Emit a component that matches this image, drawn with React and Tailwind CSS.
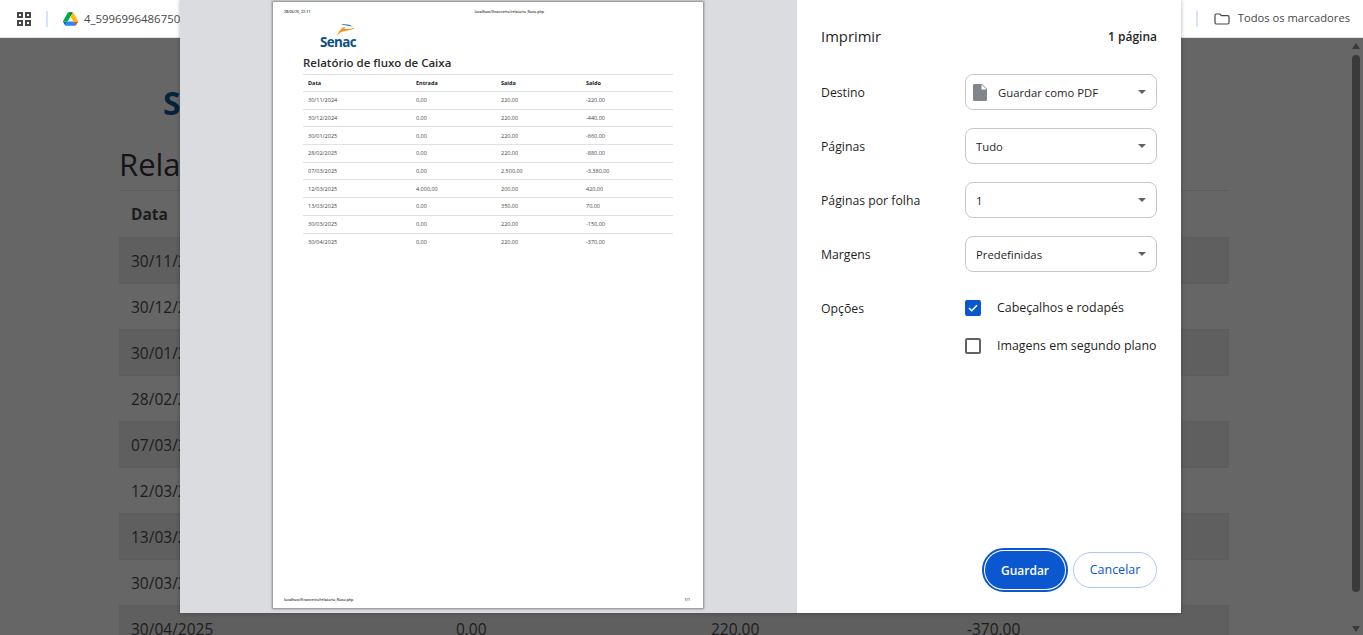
const rows = [
  ["30/11/2024", "0,00", "220,00", "-220,00"],
  ["30/12/2024", "0,00", "220,00", "-440,00"],
  ["30/01/2025", "0,00", "220,00", "-660,00"],
  ["28/02/2025", "0,00", "220,00", "-880,00"],
  ["07/03/2025", "0,00", "2.500,00", "-3.380,00"],
  ["12/03/2025", "4.000,00", "200,00", "420,00"],
  ["13/03/2025", "0,00", "350,00", "70,00"],
  ["30/03/2025", "0,00", "220,00", "-150,00"],
  ["30/04/2025", "0,00", "220,00", "-370,00"],
];

function AppsIcon() {
  return (
    <svg width="16" height="16" viewBox="0 0 16 16" fill="none" stroke="#474747" strokeWidth="2">
      <rect x="2" y="2" width="4" height="4" />
      <rect x="10" y="2" width="4" height="4" />
      <rect x="2" y="10" width="4" height="4" />
      <rect x="10" y="10" width="4" height="4" />
    </svg>
  );
}

function DriveIcon() {
  return (
    <svg width="15" height="14" viewBox="0 0 87.3 78">
      <path d="m6.6 66.85 3.85 6.65c.8 1.4 1.95 2.5 3.3 3.3l13.75-23.8h-27.5c0 1.55.4 3.1 1.2 4.5z" fill="#0066da" />
      <path d="m43.65 25-13.75-23.8c-1.35.8-2.5 1.9-3.3 3.3l-25.4 44a9.06 9.06 0 0 0 -1.2 4.5h27.5z" fill="#00ac47" />
      <path d="m73.55 76.8c1.35-.8 2.5-1.9 3.3-3.3l1.6-2.75 7.65-13.25c.8-1.4 1.2-2.95 1.2-4.5h-27.502l5.852 11.5z" fill="#ea4335" />
      <path d="m43.65 25 13.75-23.8c-1.35-.8-2.9-1.2-4.5-1.2h-18.5c-1.6 0-3.15.45-4.5 1.2z" fill="#00832d" />
      <path d="m59.8 53h-32.3l-13.75 23.8c1.35.8 2.9 1.2 4.5 1.2h50.8c1.6 0 3.15-.45 4.5-1.2z" fill="#2684fc" />
      <path d="m73.4 26.5-12.7-22c-.8-1.4-1.95-2.5-3.3-3.3l-13.75 23.8 16.15 28h27.45c0-1.55-.4-3.1-1.2-4.5z" fill="#ffba00" />
    </svg>
  );
}

function FolderIcon() {
  return (
    <svg width="16" height="12" viewBox="0 0 16 12" fill="none" stroke="#474747" strokeWidth="1.2">
      <path d="M1 2.2c0-.7.5-1.2 1.2-1.2h3.6l1.6 1.6h6.4c.7 0 1.2.5 1.2 1.2v6c0 .7-.5 1.2-1.2 1.2H2.2c-.7 0-1.2-.5-1.2-1.2z" />
    </svg>
  );
}

function Toolbar() {
  return (
    <div className="h-[38px] shrink-0 bg-white border-b border-[#e0e0e0] flex items-center text-[#474747]">
      <div className="ml-[16px] flex items-center"><AppsIcon /></div>
      <div className="ml-[14px] w-[2px] h-[16px] bg-[#d3e3fd]" />
      <div className="ml-[15px] flex items-center"><DriveIcon /></div>
      <span className="ml-[6px] text-[11.4px]">4_5996996486750</span>
      <div className="ml-auto w-[2px] h-[16px] bg-[#d3e3fd]" />
      <div className="ml-[16px] flex items-center"><FolderIcon /></div>
      <span className="ml-[8px] mr-[13px] text-[11.2px]">Todos os marcadores</span>
    </div>
  );
}

// pagina por tras do dialogo
function BackgroundPage() {
  return (
    <div className="flex-1 min-h-0 bg-[#666666] flex overflow-hidden text-[#1c1c1c]">
      <div className="flex-1 pl-[119px] pr-[120px]">
        <div className="h-[60px] mt-[47px] pl-[44px] text-[#06233d] text-[32px] font-bold leading-[36px]">Senac</div>
        <div className="text-[31px] leading-[38px] font-medium text-[#141414]">Relatório de fluxo de Caixa</div>
        <div className="mt-[7px] border-t border-[#5c5c5c]">
          <div className="h-[46px] grid grid-cols-[325px_255px_256px_1fr] items-center px-[12px] pt-[2px] text-[15.5px] font-bold">
            <span>Data</span><span>Entrada</span><span>Saída</span><span>Saldo</span>
          </div>
          {rows.map((r, i) => (
            <div
              key={r[0]}
              className={`h-[46px] grid grid-cols-[325px_255px_256px_1fr] items-center px-[12px] pt-[3px] text-[15.5px] border-t border-[#5c5c5c] ${i % 2 === 0 ? "bg-[#5f5f5f]" : ""}`}
            >
              {r.map((c, j) => <span key={j}>{c}</span>)}
            </div>
          ))}
        </div>
      </div>
      <div className="w-[14px] shrink-0 flex flex-col items-center py-[3px]">
        <div className="mt-[2px] w-0 h-0 border-x-[4.5px] border-x-transparent border-b-[6px] border-b-[#3a3a3a]" />
        <div className="mt-[6px] h-[537px] w-[8px] rounded-full bg-[#3a3a3a]" />
        <div className="mt-auto w-0 h-0 border-x-[4.5px] border-x-transparent border-t-[6px] border-t-[#3a3a3a]" />
      </div>
    </div>
  );
}

function SenacLogo() {
  return (
    <div className="ml-[46px] mt-[10px] w-[38px] flex flex-col items-center">
      <svg width="18" height="12" viewBox="0 0 18 12" className="ml-[16px]">
        <path d="M0 12C2 6.500 5 3.500 8 3 7 4.500 7.500 5 9 5 12 5 15 4.500 18 3.500 14 7 8 6.500 4.500 8 2.500 9 1 10.500 0 12z" fill="#f7941d" />
        <path d="M4 0.500C8 0 13 0.800 15.500 2.500 12 1.800 8 1.400 4 0.500z" fill="#0b4f8a" />
      </svg>
      <span className="text-[#0b4f8a] text-[13.4px] leading-[12px] font-bold tracking-[-0.6px]">Senac</span>
    </div>
  );
}

function PreviewPage() {
  return (
    <div className="w-[430px] h-[606px] mt-[2px] bg-white shadow-[0_0_2px_1px_rgba(60,64,67,0.55)] flex flex-col text-[#202124]">
      <div className="mt-[7px] pl-[11px] pr-[159px] flex justify-between text-[3.6px] leading-[5px] font-semibold text-[#333333]">
        <span>28/05/25, 22:11</span>
        <span>localhost/financeiro/relatorio_fluxo.php</span>
      </div>
      <SenacLogo />
      <div className="mt-[7px] pl-[30px] text-[11.5px] leading-[16px] font-semibold text-[#2b2b2b]">Relatório de fluxo de Caixa</div>
      <div className="mt-[3px] mx-[30px] border-t border-[#dee2e6] text-[5.5px]">
        <div className="h-[16px] grid grid-cols-[108px_85px_85px_1fr] items-center pl-[5px] font-bold">
          <span>Data</span><span>Entrada</span><span>Saída</span><span>Saldo</span>
        </div>
        {rows.map((r) => (
          <div key={r[0]} className="h-[17.7px] grid grid-cols-[108px_85px_85px_1fr] items-center pl-[5px] border-t border-[#dee2e6] text-[#444444]">
            {r.map((c, j) => <span key={j}>{c}</span>)}
          </div>
        ))}
      </div>
      <div className="mt-auto mb-[6px] pl-[11px] pr-[13px] flex justify-between text-[3.6px] leading-[5px] font-semibold text-[#333333]">
        <span>localhost/financeiro/relatorio_fluxo.php</span>
        <span>1/1</span>
      </div>
    </div>
  );
}

function Select({ icon, children }) {
  return (
    <div className="w-[192px] h-[36px] rounded-[8px] border border-[#c7c7c7] flex items-center pl-[10px] pr-[10px] text-[11.3px] text-[#1f1f1f]">
      {icon}
      <span className="pt-[2px]">{children}</span>
      <div className="ml-auto w-0 h-0 border-x-[4px] border-x-transparent border-t-[4px] border-t-[#5f6368]" />
    </div>
  );
}

function SettingRow({ label, children }) {
  return (
    <div className="h-[36px] mb-[18px] flex items-center justify-between">
      <span className="pt-[2px] text-[12.25px] text-[#1f1f1f]">{label}</span>
      {children}
    </div>
  );
}

function Check({ checked, label }) {
  return (
    <div className="h-[16px] flex items-center">
      {checked ? (
        <div className="w-[16px] h-[16px] rounded-[2px] bg-[#0b57d0] flex items-center justify-center">
          <svg width="10" height="8" viewBox="0 0 10 8" fill="none" stroke="white" strokeWidth="1.6"><path d="M1 4l2.7 2.7L9 1.3" /></svg>
        </div>
      ) : (
        <div className="w-[16px] h-[16px] rounded-[2px] border-2 border-[#5f6368]" />
      )}
      <span className="ml-[16px] text-[12.4px] whitespace-nowrap text-[#1f1f1f]">{label}</span>
    </div>
  );
}

function Sidebar() {
  return (
    <div className="w-[384px] shrink-0 bg-white pl-[24px] pr-[24px] flex flex-col">
      <div className="h-[74px] flex items-center justify-between">
        <span className="pb-[2px] text-[14.8px] text-[#1f1f1f]">Imprimir</span>
        <span className="text-[12px] font-semibold text-[#1f1f1f]">1 página</span>
      </div>
      <SettingRow label="Destino">
        <Select icon={
          <svg width="14" height="17" viewBox="0 0 14 17" className="mr-[11px] -ml-[3px]">
            <path d="M1.5 0H9l5 5v10.500c0 .8-.7 1.500-1.500 1.500h-11C.7 17 0 16.300 0 15.500V1.500C0 .7.700 0 1.500 0z" fill="#80868b" />
            <path d="M8.500 0.500V5.500H13.500z" fill="#ffffff" />
          </svg>
        }>Guardar como PDF</Select>
      </SettingRow>
      <SettingRow label="Páginas"><Select>Tudo</Select></SettingRow>
      <SettingRow label="Páginas por folha"><Select>1</Select></SettingRow>
      <SettingRow label="Margens"><Select>Predefinidas</Select></SettingRow>
      <div className="flex mt-[10px]">
        <span className="w-[144px] text-[12.25px] leading-[16px] text-[#1f1f1f] pt-[1px]">Opções</span>
        <div className="flex flex-col gap-[22px]">
          <Check checked label="Cabeçalhos e rodapés" />
          <Check label="Imagens em segundo plano" />
        </div>
      </div>
      <div className="mt-auto mb-[21px] flex justify-end items-center gap-[5px]">
        <div className="w-[86px] h-[44px] rounded-full border-2 border-[#0b57d0] p-[1px] flex">
          <div className="flex-1 rounded-full bg-[#0b57d0] text-white pt-[1px] text-[12px] font-semibold flex items-center justify-center">Guardar</div>
        </div>
        <div className="w-[84px] h-[36px] rounded-full border border-[#a8c7fa] text-[#0b57d0] pt-[1px] text-[12.5px] font-medium flex items-center justify-center">Cancelar</div>
      </div>
    </div>
  );
}

export default function App() {
  return (
    <div className="relative h-screen overflow-hidden flex flex-col font-['Open_Sans',sans-serif]">
      <Toolbar />
      <BackgroundPage />
      {/* dialogo de impressao */}
      <div className="absolute left-[180px] top-0 w-[1001px] h-[613px] flex bg-[#dadce0] shadow-[0_0_4px_rgba(0,0,0,0.3)]">
        <div className="flex-1 flex pl-[93px]"><PreviewPage /></div>
        <Sidebar />
      </div>
    </div>
  );
}
